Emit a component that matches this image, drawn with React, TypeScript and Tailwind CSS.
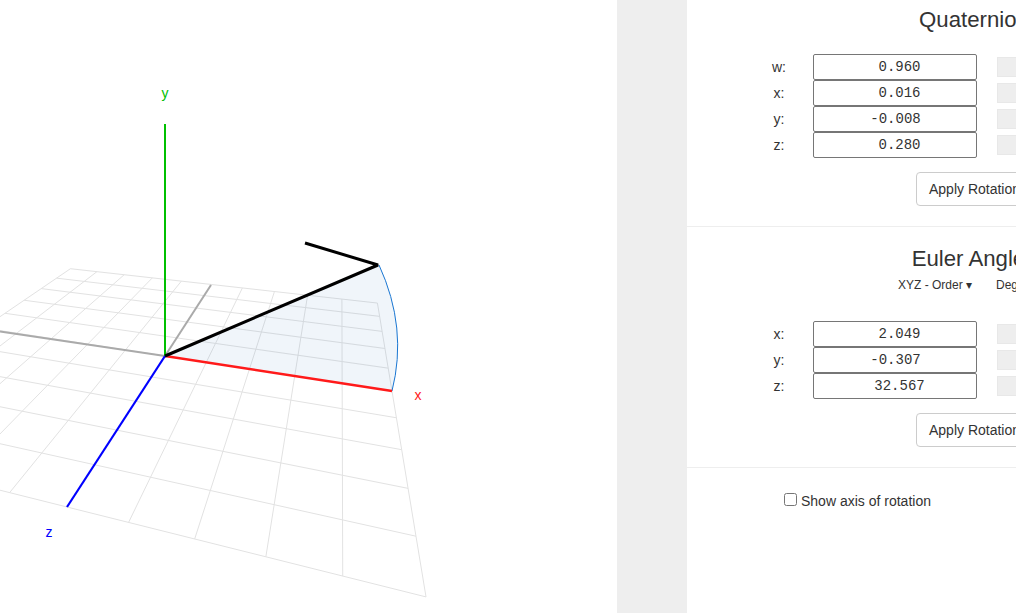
import React from "react";

// floor plane homography, u along x axis and v along z axis, both -1..1
const project = (u: number, v: number) => {
  const w = 1 - 0.1109 * u - 0.3572 * v;
  return {
    x: (183.5 * u - 121.9 * v + 165) / w,
    y: (-8.4 * u - 30.1 * v + 356) / w,
  };
};

const ticks = [-1, -0.8, -0.6, -0.4, -0.2, 0, 0.2, 0.4, 0.6, 0.8, 1];

const Scene = () => {
  return (
    <svg width="617" height="613" viewBox="0 0 617 613" className="block">
      {ticks.map((t) => {
        const a = project(t, -1);
        const b = project(t, 1);
        const c = project(-1, t);
        const d = project(1, t);
        return (
          <g key={t} stroke="#e2e2e2" strokeWidth="1">
            <line x1={a.x} y1={a.y} x2={b.x} y2={b.y} />
            <line x1={c.x} y1={c.y} x2={d.x} y2={d.y} />
          </g>
        );
      })}
      <path d="M165 356L392 391Q408 328 379 265Z" fill="#2f6fbf" fillOpacity="0.07" />
      <path d="M392 391Q408 328 379 265" fill="none" stroke="#1976d2" strokeWidth="1" />
      <line x1="165" y1="356" x2="211" y2="285" stroke="#aaaaaa" strokeWidth="2" />
      <line x1="165" y1="356" x2="0" y2="331.5" stroke="#aaaaaa" strokeWidth="2" />
      <line x1="165" y1="356" x2="165" y2="124" stroke="#00c000" strokeWidth="2" />
      <line x1="165" y1="356" x2="392" y2="391" stroke="#ff1a1a" strokeWidth="2.5" />
      <line x1="165" y1="356" x2="67" y2="507" stroke="#0000ff" strokeWidth="2.2" />
      <path
        d="M165 356L378 265L305 243"
        fill="none"
        stroke="#000000"
        strokeWidth="3"
        strokeLinejoin="bevel"
      />
      <text x="165" y="98" textAnchor="middle" fontSize="14" fill="#00c000">y</text>
      <text x="418" y="400" textAnchor="middle" fontSize="14" fill="#ff1a1a">x</text>
      <text x="49" y="537" textAnchor="middle" fontSize="14" fill="#0000ff">z</text>
    </svg>
  );
};

interface RowProps {
  label: string;
  value: string;
}

const Row: React.FC<RowProps> = ({ label, value }) => {
  // values without a sign sit half a character further right
  const negative = value.startsWith("-");
  return (
    <div className="flex items-center h-[26px] pl-[58px]">
      <label className="w-[68px] text-center text-sm text-[#333]">{label}</label>
      <input
        readOnly
        defaultValue={value}
        className={`w-[164px] h-[26px] shrink-0 border border-[#767676] rounded-[2px] text-center text-sm text-[#333] font-['Liberation_Mono',monospace] ${
          negative ? "pl-px" : "pl-[9px]"
        }`}
      />
      <div className="w-[206px] h-5 ml-5 bg-[#eeeeee] border border-[#e8e8e8]" />
    </div>
  );
};

const ApplyButton = () => (
  <div className="flex pl-[229px] mt-[14px]">
    <button className="px-3 h-[34px] bg-white border border-[#cccccc] rounded text-sm text-[#333]">
      Apply Rotation
    </button>
  </div>
);

const App = () => {
  return (
    <div className="flex w-[1016px] h-[613px] overflow-hidden bg-[#eeeeee] font-['Liberation_Sans',Arial,sans-serif]">
      <div className="w-[617px] shrink-0 bg-white">
        <Scene />
      </div>
      <div className="w-[574px] shrink-0 ml-[70px] bg-white text-[#333]">
        <section className="h-[227px] border-b border-[#eeeeee]">
          <h2 className="h-10 leading-10 text-center text-[22.2px]">Quaternion</h2>
          <div className="mt-[14px]">
            <Row label="w:" value="0.960" />
            <Row label="x:" value="0.016" />
            <Row label="y:" value="-0.008" />
            <Row label="z:" value="0.280" />
          </div>
          <ApplyButton />
        </section>

        <section className="h-[241px] pt-3 border-b border-[#eeeeee]">
          <h2 className="h-[39px] leading-10 text-center text-[22.2px]">Euler Angles</h2>
          <div className="flex gap-6 h-[14px] items-center pl-[211px] text-xs">
            <span>XYZ - Order ▾</span>
            <span>Degrees ▾</span>
          </div>
          <div className="mt-[29px]">
            <Row label="x:" value="2.049" />
            <Row label="y:" value="-0.307" />
            <Row label="z:" value="32.567" />
          </div>
          <ApplyButton />
        </section>

        <label className="flex items-center gap-1 pt-[23px] pl-[97px] text-sm">
          <input type="checkbox" className="w-[13px] h-[13px] mb-[3px]" />
          Show axis of rotation
        </label>
      </div>
    </div>
  );
};

export default App;
